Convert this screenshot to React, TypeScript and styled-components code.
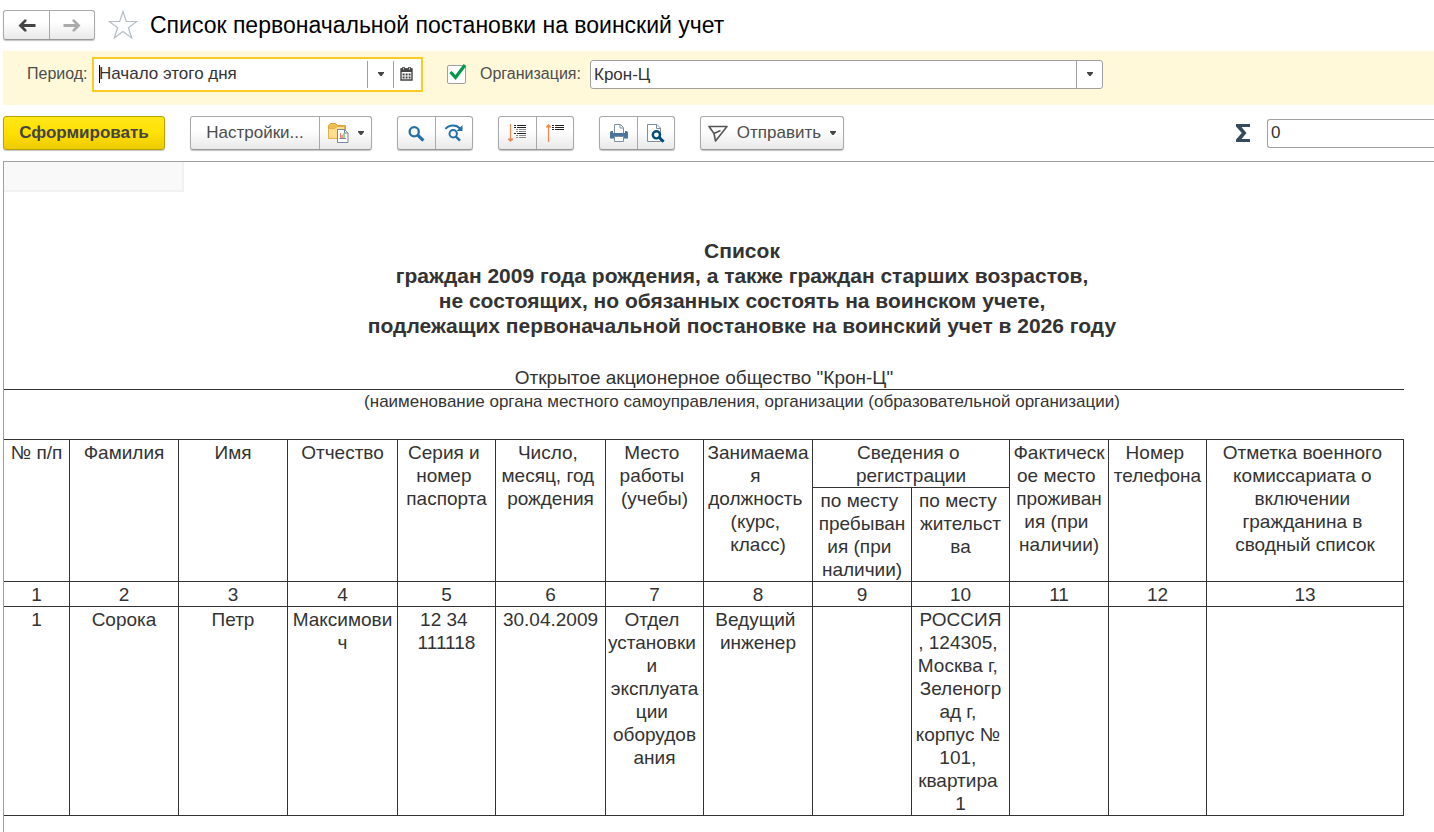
import React from "react";
import styled, { createGlobalStyle, css } from "styled-components";

const GlobalStyle = createGlobalStyle`
  *, *::before, *::after { box-sizing: border-box; }
  body {
    margin: 0;
    background: #fff;
    color: #333;
    font-family: "Liberation Sans", Arial, sans-serif;
    font-size: 16px;
    overflow-x: hidden;
  }
  button, input, select { font: inherit; color: inherit; margin: 0; }
`;

const Page = styled.div`
  display: flex;
  flex-direction: column;
  min-height: 100vh;
  padding-left: 3px;
`;

const TitleBar = styled.header`
  display: flex;
  align-items: center;
  height: 51px;
  padding-bottom: 1px;
`;

const ButtonGroup = styled.div`
  display: flex;
  flex: none;
  height: 34px;
  border: 1px solid #a9a9a9;
  border-bottom-color: #979797;
  border-radius: 3px;
  background: linear-gradient(#fff 40%, #e9e9e9);
  box-shadow: 0 1px 1px #c4c4c4;
`;

const NavGroup = styled(ButtonGroup)`
  height: 30px;
`;

const GroupButton = styled.button<{ $width: number }>`
  display: flex;
  align-items: center;
  justify-content: center;
  gap: 9px;
  width: ${(p) => p.$width}px;
  padding: 0;
  border: 0;
  background: none;
  color: #4d4d4d;
  font-size: 17px;

  & + & {
    border-left: 1px solid #a9a9a9;
  }
`;

const StarButton = styled.button`
  display: flex;
  margin: 0 12px 0 13px;
  padding: 0;
  border: 0;
  background: none;
`;

const PageTitle = styled.h1`
  margin: 0;
  color: #000;
  font-size: 23px;
  font-weight: 400;
  line-height: 28px;
  white-space: nowrap;
`;

const FilterBar = styled.form`
  display: flex;
  align-items: center;
  height: 54px;
  padding: 0 0 8px 24px;
  background: #fff9da;
`;

const FieldLabel = styled.label<{ $width: number }>`
  flex: none;
  width: ${(p) => p.$width}px;
  color: #4d4d4d;
  line-height: 20px;
  white-space: nowrap;
`;

const PeriodField = styled.div`
  display: flex;
  flex: 0 1 331px;
  height: 35px;
  margin-right: 24px;
  padding: 2px;
  border: 2px solid #fbcd22;
  background: #fff;
`;

const PeriodInput = styled.input`
  flex: 1;
  min-width: 0;
  margin-left: 3px;
  padding: 0;
  border: 0;
  outline: 0;
  background: linear-gradient(#000, #000) left center / 1px 18px no-repeat;
  font-size: 17px;
`;

const FieldButton = styled.button`
  display: flex;
  align-items: center;
  justify-content: center;
  width: 26px;
  padding: 0;
  border: 0;
  border-left: 1px solid #a0a0a0;
  background: none;
`;

const CheckWrap = styled.span`
  display: grid;
  flex: none;
  margin-right: 14px;

  & > * { grid-area: 1 / 1; }
  & > svg { pointer-events: none; }
  & > input:not(:checked) + svg { visibility: hidden; }
`;

const CheckInput = styled.input`
  appearance: none;
  width: 19px;
  height: 19px;
  border: 1px solid #a0a0a0;
  border-radius: 2px;
  background: #fff;
`;

const SelectWrap = styled.div`
  display: grid;
  grid-template-columns: 1fr 26px;
  flex: 0 1 513px;
  height: 29px;
  border: 1px solid #a0a0a0;
  border-radius: 3px;
  background: #fff;
`;

const OrgSelect = styled.select`
  grid-area: 1 / 1 / 2 / 3;
  appearance: none;
  min-width: 0;
  padding: 0 26px 0 3px;
  border: 0;
  outline: 0;
  background: none;
  font-size: 17px;
`;

const SelectArrow = styled.span`
  grid-area: 1 / 2;
  display: flex;
  align-items: center;
  justify-content: center;
  border-left: 1px solid #a0a0a0;
  pointer-events: none;
`;

const Toolbar = styled.div`
  display: flex;
  align-items: center;
  gap: 25px;
  height: 56px;
`;

const PrimaryButton = styled.button`
  flex: none;
  width: 162px;
  height: 34px;
  padding: 0;
  border: 1px solid #b5a100;
  border-radius: 3px;
  background: linear-gradient(#ffe71a, #ffe000 50%, #edcb00);
  box-shadow: 0 1px 1px #c4c4c4;
  color: #444;
  font-size: 17px;
  font-weight: 700;
`;

const SumBox = styled.div`
  display: flex;
  align-items: center;
  gap: 17px;
  margin-left: auto;
`;

const SumInput = styled.input`
  width: 167px;
  height: 29px;
  padding: 0 3px;
  border: 1px solid #a0a0a0;
  border-right: 0;
  border-radius: 3px 0 0 3px;
  font-size: 17px;
`;

const Report = styled.main`
  flex: 1;
  padding-right: 30px;
  border: solid #a0a0a0;
  border-width: 1px 0 0 1px;
`;

const CornerCell = styled.div`
  width: 180px;
  height: 30px;
  border: solid #f1f1f1;
  border-width: 0 2px 2px 0;
  background: #f9f9f9;
`;

const headingIndent = css`
  padding-left: 76px;
  text-align: center;
`;

const ReportTitle = styled.h2`
  ${headingIndent}
  margin: 46px 0 28px;
  font-size: 21px;
  font-weight: 700;
  line-height: 25px;
`;

const OrgName = styled.p`
  margin: 0;
  border-bottom: 1px solid #333;
  font-size: 19px;
  line-height: 23px;
  text-align: center;
`;

const OrgCaption = styled.p`
  ${headingIndent}
  margin: 0;
  font-size: 17px;
  line-height: 23px;
`;

const ReportTable = styled.table`
  width: 100%;
  margin-top: 26px;
  table-layout: fixed;
  border-collapse: separate;
  border-spacing: 0;
  border-top: 1px solid #333;
  font-size: 19px;
  line-height: 23px;
  text-align: center;

  th, td {
    padding: 1px 0 0;
    border: solid #333;
    border-width: 0 1px 1px 0;
    font-weight: 400;
    vertical-align: top;
    white-space: pre;
  }
`;

const columnWidths = [66, 109, 109, 110, 98, 110, 98, 109, 99, 98, 99, 98, 197];

const leadingHeads = [
  "№ п/п",
  "Фамилия",
  "Имя",
  "Отчество",
  "Серия и \nномер \nпаспорта",
  "Число, \nмесяц, год \nрождения",
  "Место \nработы \n(учебы)",
  "Занимаема\nя \nдолжность \n(курс, \nкласс)",
];

const trailingHeads = [
  "Фактическ\nое место \nпроживан\nия (при \nналичии)",
  "Номер \nтелефона",
  "Отметка военного \nкомиссариата о \nвключении \nгражданина в \nсводный список",
];

const person = [
  "1",
  "Сорока",
  "Петр",
  "Максимови\nч",
  "12 34 \n111118",
  "30.04.2009",
  "Отдел \nустановки \nи \nэксплуата\nции \nоборудов\nания",
  "Ведущий \nинженер",
  "",
  "РОССИЯ\n, 124305, \nМосква г, \nЗеленогр\nад г, \nкорпус № \n101, \nквартира \n1",
  "",
  "",
  "",
];

const ArrowIcon = ({ color, flip }: { color: string; flip?: boolean }) => (
  <svg width="18" height="13" viewBox="0 0 18 13" aria-hidden="true">
    <path
      d="M0.5 6.5L6.5 0.5H8.5V2.2L5.8 5H17.5V8H5.8L8.5 10.8V12.5H6.5Z"
      fill={color}
      transform={flip ? "rotate(180 9 6.5)" : undefined}
    />
  </svg>
);

const StarIcon = () => (
  <svg width="30" height="30" viewBox="0 0 30 30" aria-hidden="true">
    <path
      d="M15 1.5L18.3 11.5H28.8L20.4 17.7L23.7 28L15 21.6L6.3 28L9.6 17.7L1.2 11.5H11.7Z"
      fill="none"
      stroke="#b4bcc4"
      strokeWidth="1.2"
    />
  </svg>
);

const CaretDown = () => (
  <svg width="6" height="4" viewBox="0 0 6 4" aria-hidden="true">
    <path d="M0 0H6V1L3.6 4H2.4L0 1Z" fill="#444" />
  </svg>
);

const CalendarIcon = () => (
  <svg width="13" height="14" viewBox="0 0 13 14" aria-hidden="true">
    <path d="M1 2H12V13H1Z" fill="#fff" stroke="#444" strokeWidth="1.4" />
    <path d="M1 1.5H12V5H1Z" fill="#444" />
    <path d="M3.5 0V3M9.5 0V3" stroke="#444" strokeWidth="2.6" />
    <path d="M3.5 0.8V2.6M9.5 0.8V2.6" stroke="#fff" strokeWidth="0.8" />
    <path d="M2.6 7.5H10.6M2.6 10.5H10.6" stroke="#444" strokeWidth="2" strokeDasharray="2 1" />
  </svg>
);

const CheckIcon = () => (
  <svg width="19" height="19" viewBox="0 0 19 19" overflow="visible" aria-hidden="true">
    <path d="M3.5 7L8.5 12.5L18 0" fill="none" stroke="#009a4a" strokeWidth="3.2" />
  </svg>
);

const FolderReportIcon = () => (
  <svg width="21" height="20" viewBox="0 0 21 20" aria-hidden="true">
    <path d="M0.5 15.5V2.5L2.5 0.5H7.5L9.5 2.5H17.5V15.5Z" fill="#f0bd55" stroke="#dba23a" />
    <path d="M0.5 15.5V5.5H7L9 3.5H16.5V15.5Z" fill="#ffdf8e" stroke="#e3ae4c" />
    <path d="M9.5 6.5H16.5L20 10V19.5H9.5Z" fill="#fff" stroke="#75879a" />
    <path d="M16.5 6.5V10H20" fill="none" stroke="#75879a" />
    <path d="M12.5 10V15" stroke="#f08b72" />
    <path d="M14 12V15" stroke="#d93a2b" />
    <path d="M16 10V15" stroke="#38a83d" />
    <path d="M11.5 15.5H18" stroke="#75879a" />
  </svg>
);

const SearchIcon = () => (
  <svg width="17" height="17" viewBox="0 0 17 17" aria-hidden="true">
    <circle cx="6.2" cy="6.7" r="4.6" fill="none" stroke="#246fa5" strokeWidth="2.3" />
    <path d="M9.8 10.2L15.4 15.6" stroke="#246fa5" strokeWidth="3.2" />
  </svg>
);

const SearchNextIcon = () => (
  <svg width="18" height="18" viewBox="0 0 18 18" aria-hidden="true">
    <path d="M0.5 5C4 0.3 11.5 0.3 15 4.5" fill="none" stroke="#246fa5" strokeWidth="2" />
    <path d="M17.5 1V7H11.5Z" fill="#246fa5" />
    <circle cx="8.2" cy="9.8" r="3.7" fill="none" stroke="#246fa5" strokeWidth="2" />
    <path d="M10.9 12.6L15 16.7" stroke="#246fa5" strokeWidth="2.4" />
  </svg>
);

const ExpandIcon = () => (
  <svg width="19" height="18" viewBox="0 0 19 18" aria-hidden="true">
    <path d="M2.5 0V16" stroke="#f5854b" strokeWidth="1.2" />
    <path d="M0 14.5H5V15.5L2.5 18L0 15.5Z" fill="#f5854b" />
    <path d="M6 1.5H8M9 1.5H18M6 3.5H8M9 3.5H18M6 9.5H8M9 9.5H18" stroke="#222" />
    <path d="M8 5.5H10M11 5.5H18M8 7.5H10M11 7.5H18M8 11.5H10M11 11.5H18M8 13.5H10M11 13.5H18" stroke="#888" />
  </svg>
);

const CollapseIcon = () => (
  <svg width="18" height="18" viewBox="0 0 18 18" aria-hidden="true">
    <path d="M2.5 2V18" stroke="#f5854b" strokeWidth="1.2" />
    <path d="M0 3.5H5V2.5L2.5 0L0 2.5Z" fill="#f5854b" />
    <path d="M6 1.5H8M9 1.5H18M6 3.5H8M9 3.5H18M6 5.5H8M9 5.5H18" stroke="#222" />
  </svg>
);

const PrinterIcon = () => (
  <svg width="18" height="18" viewBox="0 0 18 18" aria-hidden="true">
    <path d="M4.5 9V0.5H10.5L13.5 3.5V9" fill="#fff" stroke="#7d8fa3" />
    <path d="M10 0.5V4H13.5" fill="none" stroke="#7d8fa3" />
    <path d="M1 7H3V9H15V7H17L18 8.5V14.5H0V8.5Z" fill="#4a74a0" />
    <path d="M4.5 12.5H13.5V17.5H4.5Z" fill="#fff" stroke="#7d8fa3" />
  </svg>
);

const PreviewIcon = () => (
  <svg width="18" height="19" viewBox="0 0 18 19" aria-hidden="true">
    <path d="M13.5 17.5H0.5V0.5H10L13.5 4Z" fill="#fff" stroke="#7d8fa3" />
    <path d="M9.5 0.5V4.5H13.5" fill="none" stroke="#7d8fa3" />
    <circle cx="9.4" cy="10.8" r="3.6" fill="#fff" stroke="#004a7c" strokeWidth="2.4" />
    <path d="M12.3 13.5L16.6 17.8" stroke="#004a7c" strokeWidth="3" />
  </svg>
);

const SendIcon = () => (
  <svg width="20" height="17" viewBox="0 0 20 17" aria-hidden="true">
    <path
      d="M1 1.5H19L7.5 16L6 8.5ZM6 8.5L12.5 5.5"
      fill="none"
      stroke="#555"
      strokeWidth="1.6"
      strokeLinejoin="round"
    />
  </svg>
);

const SigmaIcon = () => (
  <svg width="14" height="18" viewBox="0 0 14 18" aria-hidden="true">
    <path d="M0 0H14V3H5.5L10.5 9L5.5 15H14V18H0V15.5L5.8 9L0 2.5Z" fill="#354b5c" />
  </svg>
);

export default function App() {
  return (
    <>
      <GlobalStyle />
      <Page>
        <TitleBar>
          <NavGroup>
            <GroupButton $width={45} type="button" aria-label="Назад">
              <ArrowIcon color="#444" />
            </GroupButton>
            <GroupButton $width={45} type="button" aria-label="Вперед">
              <ArrowIcon color="#aaa" flip />
            </GroupButton>
          </NavGroup>
          <StarButton type="button" aria-label="Избранное">
            <StarIcon />
          </StarButton>
          <PageTitle>Список первоначальной постановки на воинский учет</PageTitle>
        </TitleBar>

        <FilterBar>
          <FieldLabel $width={65} htmlFor="period">Период:</FieldLabel>
          <PeriodField>
            <PeriodInput id="period" defaultValue="Начало этого дня" />
            <FieldButton type="button" aria-label="Выбрать период">
              <CaretDown />
            </FieldButton>
            <FieldButton type="button" aria-label="Календарь">
              <CalendarIcon />
            </FieldButton>
          </PeriodField>
          <CheckWrap>
            <CheckInput type="checkbox" defaultChecked aria-label="Отбор по организации" />
            <CheckIcon />
          </CheckWrap>
          <FieldLabel $width={110} htmlFor="organization">Организация:</FieldLabel>
          <SelectWrap>
            <OrgSelect id="organization" defaultValue="Крон-Ц">
              <option>Крон-Ц</option>
            </OrgSelect>
            <SelectArrow>
              <CaretDown />
            </SelectArrow>
          </SelectWrap>
        </FilterBar>

        <Toolbar>
          <PrimaryButton type="button">Сформировать</PrimaryButton>
          <ButtonGroup>
            <GroupButton $width={128} type="button">Настройки...</GroupButton>
            <GroupButton $width={52} type="button" aria-label="Варианты отчета">
              <FolderReportIcon />
              <CaretDown />
            </GroupButton>
          </ButtonGroup>
          <ButtonGroup>
            <GroupButton $width={37} type="button" aria-label="Найти">
              <SearchIcon />
            </GroupButton>
            <GroupButton $width={37} type="button" aria-label="Найти далее">
              <SearchNextIcon />
            </GroupButton>
          </ButtonGroup>
          <ButtonGroup>
            <GroupButton $width={37} type="button" aria-label="Развернуть группы">
              <ExpandIcon />
            </GroupButton>
            <GroupButton $width={37} type="button" aria-label="Свернуть группы">
              <CollapseIcon />
            </GroupButton>
          </ButtonGroup>
          <ButtonGroup>
            <GroupButton $width={37} type="button" aria-label="Печать">
              <PrinterIcon />
            </GroupButton>
            <GroupButton $width={37} type="button" aria-label="Предварительный просмотр">
              <PreviewIcon />
            </GroupButton>
          </ButtonGroup>
          <ButtonGroup>
            <GroupButton $width={142} type="button">
              <SendIcon />
              Отправить
              <CaretDown />
            </GroupButton>
          </ButtonGroup>
          <SumBox>
            <SigmaIcon />
            <SumInput aria-label="Сумма" defaultValue="0" />
          </SumBox>
        </Toolbar>

        <Report>
          <CornerCell />
          <ReportTitle>
            Список
            <br />
            граждан 2009 года рождения, а также граждан старших возрастов,
            <br />
            не состоящих, но обязанных состоять на воинском учете,
            <br />
            подлежащих первоначальной постановке на воинский учет в 2026 году
          </ReportTitle>
          <OrgName>Открытое акционерное общество "Крон-Ц"</OrgName>
          <OrgCaption>
            (наименование органа местного самоуправления, организации (образовательной организации)
          </OrgCaption>
          <ReportTable>
            <colgroup>
              {columnWidths.map((width, i) => (
                <col key={i} width={width} />
              ))}
            </colgroup>
            <thead>
              <tr>
                {leadingHeads.map((head) => (
                  <th key={head} rowSpan={2}>{head}</th>
                ))}
                <th colSpan={2}>{"Сведения о \nрегистрации"}</th>
                {trailingHeads.map((head) => (
                  <th key={head} rowSpan={2}>{head}</th>
                ))}
              </tr>
              <tr>
                <th>{"по месту \nпребыван\nия (при \nналичии)"}</th>
                <th>{"по месту \nжительст\nва"}</th>
              </tr>
            </thead>
            <tbody>
              <tr>
                {columnWidths.map((_, i) => (
                  <td key={i}>{i + 1}</td>
                ))}
              </tr>
              <tr>
                {person.map((value, i) => (
                  <td key={i}>{value}</td>
                ))}
              </tr>
            </tbody>
          </ReportTable>
        </Report>
      </Page>
    </>
  );
}
